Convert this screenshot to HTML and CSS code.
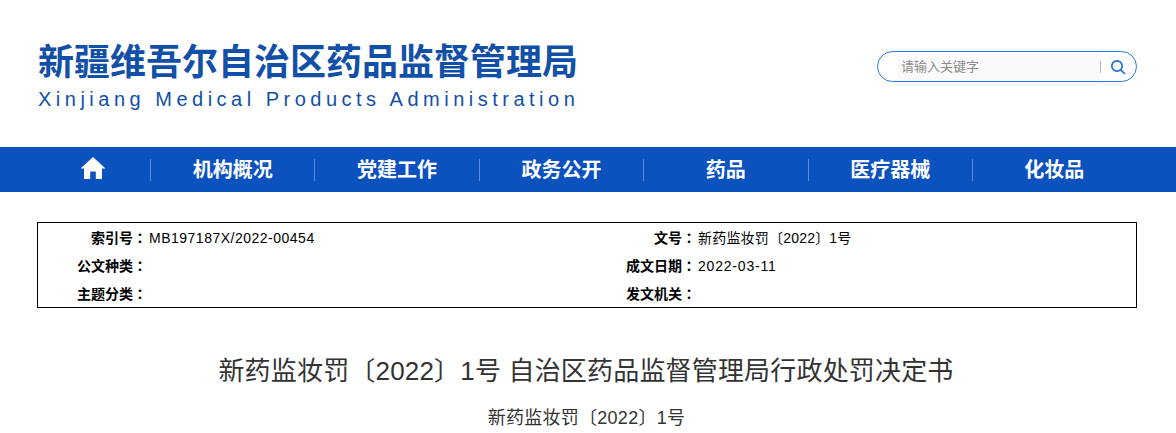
FILE: index.html
```html
<!DOCTYPE html>
<html lang="zh-CN">
<head>
  <meta charset="UTF-8">
  <title>新药监妆罚〔2022〕1号 自治区药品监督管理局行政处罚决定书</title>
  <link rel="stylesheet" href="styles.css">
</head>
<body>
  <header class="header">
    <div class="logo">
      <div class="logo-cn">新疆维吾尔自治区药品监督管理局</div>
      <div class="logo-en">Xinjiang Medical Products Administration</div>
    </div>
    <form class="search">
      <input class="search-input" type="text" placeholder="请输入关键字">
      <span class="search-line"></span>
      <button class="search-btn" type="button" aria-label="搜索">
        <svg width="16" height="16" viewBox="0 0 16 16" fill="none" stroke="#1a73e0" stroke-width="1.7">
          <circle cx="7" cy="7" r="5.2"/>
          <path d="M10.8 10.8 L15 15"/>
        </svg>
      </button>
    </form>
  </header>

  <nav class="nav">
    <div class="nav-inner">
      <a class="nav-item nav-home" aria-label="首页">
        <svg class="home-icon" width="26" height="24" viewBox="0 0 26 24" fill="#fff">
          <path d="M13 1 L25.5 12.6 L22 12.6 L22 23 L15.8 23 L15.8 15.5 L10.2 15.5 L10.2 23 L4 23 L4 12.6 L.5 12.6 Z"/>
        </svg>
      </a>
      <a class="nav-item">机构概况</a>
      <a class="nav-item">党建工作</a>
      <a class="nav-item">政务公开</a>
      <a class="nav-item">药品</a>
      <a class="nav-item">医疗器械</a>
      <a class="nav-item">化妆品</a>
    </div>
  </nav>

  <div class="info-box">
    <div class="info-row">
      <span class="info-label">索引号<i class="colon" lang="zh-Hant">：</i></span><span class="info-value">MB197187X/2022-00454</span>
      <span class="info-label">文号<i class="colon" lang="zh-Hant">：</i></span><span class="info-value info-cn">新药监妆罚〔2022〕1号</span>
    </div>
    <div class="info-row">
      <span class="info-label">公文种类<i class="colon" lang="zh-Hant">：</i></span><span class="info-value"></span>
      <span class="info-label">成文日期<i class="colon" lang="zh-Hant">：</i></span><span class="info-value info-date">2022-03-11</span>
    </div>
    <div class="info-row">
      <span class="info-label">主题分类<i class="colon" lang="zh-Hant">：</i></span><span class="info-value"></span>
      <span class="info-label">发文机关<i class="colon" lang="zh-Hant">：</i></span><span class="info-value"></span>
    </div>
  </div>

  <h1 class="title">新药监妆罚〔2022〕1号 自治区药品监督管理局行政处罚决定书</h1>
  <p class="subtitle">新药监妆罚〔2022〕1号</p>
</body>
</html>
```

FILE: styles.css
```css
html, body {
  height: 433px;
  overflow: hidden;
}
body {
  margin: 0;
  font-family: "Liberation Sans", "Noto Sans CJK SC", sans-serif;
  color: #000;
  background: #fff;
}
.header {
  display: flex;
  justify-content: space-between;
  height: 147px;
  width: 1100px;
  margin-left: 37px;
}
.logo {
  padding: 41px 0 0 1px;
  color: #1250a8;
}
.logo-cn {
  font-size: 36px;
  line-height: 44px;
  font-weight: 700;
  white-space: nowrap;
}
.logo-en {
  font-size: 20px;
  line-height: 24px;
  letter-spacing: 4.5px;
  margin-top: 2px;
  white-space: nowrap;
}
.search {
  display: flex;
  align-items: center;
  width: 260px;
  height: 31px;
  margin-top: 51px;
  box-sizing: border-box;
  border: 1px solid #2a7ae2;
  border-radius: 16px;
  padding-left: 19px;
}
.search-input {
  width: 203px;
  height: 29px;
  padding: 0 0 0 4px;
  box-sizing: border-box;
  border: none;
  outline: none;
  background: #fafafa;
  font-family: inherit;
  font-size: 13px;
}
.search-input::placeholder {
  color: #8c8c8c;
}
.search-line {
  width: 1px;
  height: 12px;
  background: #bbb;
}
.search-btn {
  padding: 0;
  margin-left: 9px;
  border: none;
  background: none;
  display: flex;
}
.nav {
  height: 45px;
  background-color: #0c52bf;
}
.nav-inner {
  display: grid;
  grid-template-columns: 113px repeat(6, 164.4px);
  width: 1100px;
  margin: 0 auto;
  height: 100%;
  align-items: center;
}
.nav-item {
  height: 22px;
  line-height: 22px;
  text-align: center;
  color: #fff;
  font-size: 20px;
  font-weight: bold;
  border-right: 1px solid #5b8bd6;
}
.nav-item:last-child {
  border-right: none;
  padding-right: 2px;
}
.nav-home {
  display: flex;
  justify-content: center;
  align-items: center;
  padding-right: 2px;
}
.home-icon {
  margin-bottom: 3px;
}
.info-box {
  width: 1100px;
  height: 86px;
  margin: 30px 0 0 37px;
  box-sizing: border-box;
  border: 1px solid #000;
  padding-top: 1px;
}
.info-row {
  display: grid;
  grid-template-columns: 109px 441px 108px 1fr;
  height: 28px;
  line-height: 28px;
  font-size: 14px;
}
.info-label {
  text-align: right;
  font-weight: bold;
}
.colon {
  font-family: "Noto Sans CJK TC", sans-serif;
  font-style: normal;
  line-height: 0;
}
.info-value {
  padding-left: 2px;
  letter-spacing: .5px;
}
.info-cn {
  letter-spacing: .2px;
}
.info-date {
  letter-spacing: .8px;
}
.title {
  margin: 46px 0 0 37px;
  width: 1100px;
  box-sizing: border-box;
  padding-right: 2px;
  text-align: center;
  font-size: 26px;
  line-height: 34px;
  font-weight: normal;
  letter-spacing: .18px;
  color: #333;
}
.subtitle {
  margin: 18px 0 0 37px;
  width: 1100px;
  box-sizing: border-box;
  padding-right: 1px;
  text-align: center;
  font-size: 18px;
  line-height: 24px;
  letter-spacing: .25px;
  color: #333;
}
```
